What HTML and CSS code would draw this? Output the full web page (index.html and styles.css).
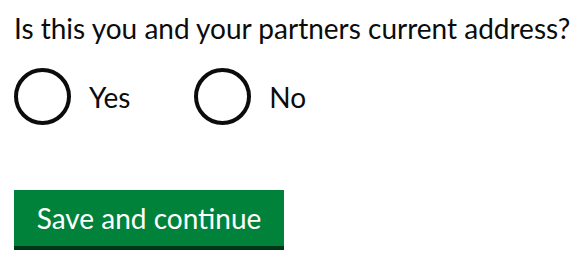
FILE: index.html
```html
<!DOCTYPE html>
<html lang="en">
<head>
<meta charset="utf-8">
<link rel="stylesheet" href="styles.css">
</head>
<body>
<form class="form">
  <fieldset class="fieldset">
    <legend class="legend">Is this you and your partners current address?</legend>
    <div class="radios">
      <label class="radio"><span class="circle"></span><span class="label-text">Yes</span></label>
      <label class="radio"><span class="circle"></span><span class="label-text">No</span></label>
    </div>
  </fieldset>
  <button class="button" type="button">Save and continue</button>
</form>
</body>
</html>
```
FILE: styles.css
```css
html, body {
  margin: 0;
  padding: 0;
  background: #ffffff;
}
body {
  font-family: Lato, "Noto Sans", sans-serif;
  color: #0b0c0c;
}
.form {
  padding: 10px 0 10px 14px;
}
.fieldset {
  border: 0;
  margin: 0;
  padding: 0;
}
.legend {
  padding: 0;
  font-size: 28px;
  line-height: 36px;
  white-space: nowrap;
  margin-bottom: 22px;
}
.radios {
  display: flex;
  gap: 64px;
}
.radio {
  display: flex;
  align-items: center;
  gap: 18px;
}
.circle {
  box-sizing: border-box;
  width: 57px;
  height: 57px;
  border: 4px solid #0b0c0c;
  border-radius: 50%;
}
.label-text {
  font-size: 28px;
}
.button {
  margin-top: 65px;
  display: block;
  width: 270px;
  height: 56px;
  border: 0;
  padding: 0;
  background: #00823b;
  color: #ffffff;
  font-family: Lato, "Noto Sans", sans-serif;
  font-size: 28px;
  white-space: nowrap;
  box-shadow: 0 4px 0 #003618;
}
```
